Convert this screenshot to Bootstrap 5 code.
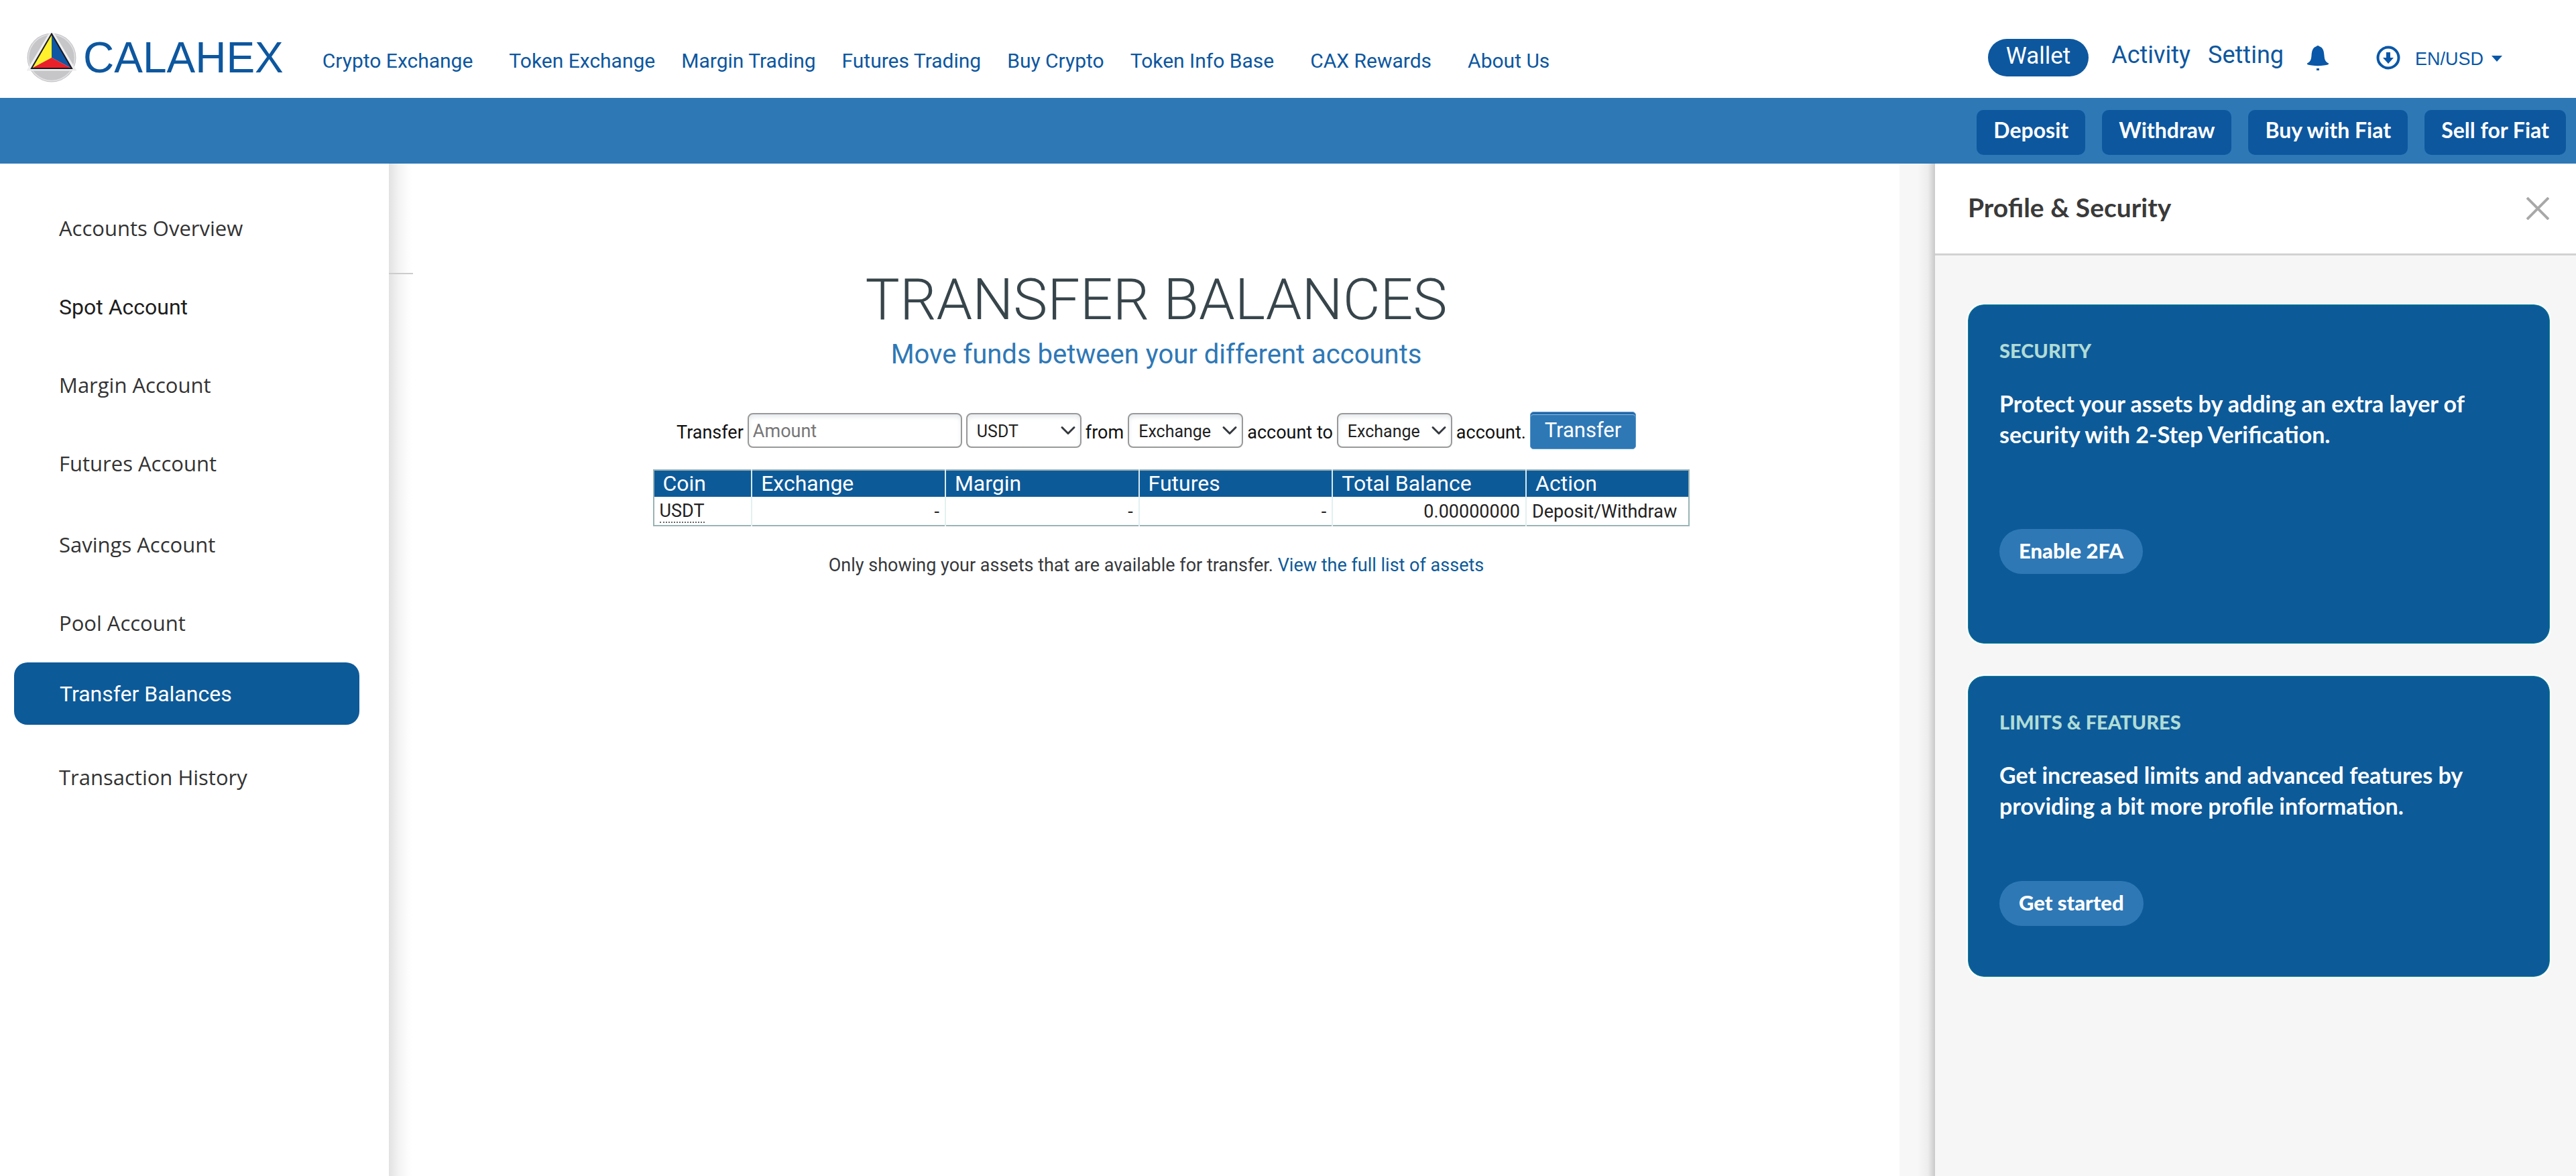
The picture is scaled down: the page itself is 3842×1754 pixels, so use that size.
<!DOCTYPE html>
<html lang="en">
<head>
<meta charset="utf-8">
<meta name="viewport" content="width=device-width, initial-scale=1">
<title>Calahex - Transfer Balances</title>
<link href="https://cdn.jsdelivr.net/npm/bootstrap@5.3.0/dist/css/bootstrap.min.css" rel="stylesheet">
<style>
  :root { --brand: #0d579f; --brand-deep: #0d5a99; --brand-soft: #2e78b6; }
  body { font-family: Roboto, "Liberation Sans", sans-serif; font-size: 27px; color: #222; background: #fff; }
  a { text-decoration: none; }

  /* top bar */
  .topbar { height: 146px; padding: 26px 106px 0 40px; }
  .brand-name { font-family: "Liberation Sans", sans-serif; font-size: 64px; line-height: 74px; color: var(--brand); margin-left: 10px; margin-right: 58px; }
  .main-links { font-size: 30px; line-height: 36px; padding-top: 10px; }
  .main-links a, .user-links a { color: var(--brand); white-space: nowrap; }
  .main-links a { margin-right: 39px; }
  .main-links a.wide { margin-right: 54px; }
  .user-links { font-size: 36px; line-height: 44px; gap: 22px; }
  .user-links .wallet-pill { font-size: 35px; line-height: 44px; color: #fff; background: var(--brand); border: 0; border-radius: 28px; padding: 4px 27px 8px; margin-right: 12px; height: 56px; }
  .user-links > a { padding-bottom: 8px; }
  .user-links > a + a { margin-left: 4px; }
  .icon-btn { border: 0; background: none; padding: 0; line-height: 0; color: #0857a8; }
  .icon-btn.bell { margin-left: 12px; }
  .icon-btn.download { margin-left: 48px; }
  .user-links .locale { font-size: 27px; line-height: 36px; border: 0; background: none; padding: 4px 0 0; color: #0857a8; font-family: "Liberation Sans", sans-serif; }

  /* action strip */
  .action-strip { background: var(--brand-soft); height: 98px; padding: 18px 15px 0; gap: 25px; }
  .action-strip .btn { font-family: Lato, sans-serif; font-weight: 700; font-size: 32px; line-height: 40px; height: 67px; padding: 10px 25px 17px; border: 0; border-radius: 10px; background: var(--brand); color: #fff; white-space: nowrap; }

  /* account menu */
  .side { width: 580px; flex: none; padding-top: 38px; }
  .side a { display: flex; align-items: center; height: 117px; padding-left: 88px; font-family: "Open Sans", "Noto Sans", sans-serif; font-size: 31px; color: #333; }
  .side a.plain { font-family: Roboto, sans-serif; font-size: 32px; color: #1d1d1d; }
  .side a.current { height: 93px; margin: 0 44px 20px 21px; padding-left: 68px; border-radius: 20px; background: var(--brand-deep); color: #fff; font-family: Roboto, sans-serif; font-size: 32px; }
  .side-shade { width: 36px; flex: none; padding-top: 163px; background: linear-gradient(to right, #e2e2e2, #f3f3f3 40%, #fdfdfd 80%, #fff); }
  .side-shade hr { margin: 0; border-top: 2px solid #ccc; opacity: 1; }

  /* transfer area */
  .work { padding-top: 153px; }
  .work h1 { font-size: 86px; line-height: 100px; font-weight: 300; color: #37454b; margin-bottom: 8px; }
  .tagline { font-size: 40px; line-height: 48px; color: var(--brand-soft); margin-bottom: 61px; }
  .transfer-form { gap: 6px; line-height: 32px; margin-bottom: 30px; color: #111; }
  .transfer-form label, .transfer-form span { padding-top: 6px; white-space: nowrap; }
  .transfer-form .form-control, .transfer-form .form-select { height: 52px; border: 2px solid #999; border-radius: 8px; box-shadow: inset 0 4px 6px #e6eaec; color: #222; }
  .transfer-form .form-control { width: 320px; font-size: 27px; padding: 6px 6px 4px; }
  .transfer-form .form-control::placeholder { color: #777; }
  .transfer-form .form-select { width: 172px; font-size: 25px; line-height: 28px; padding: 8px 30px 4px 14px; background-position: right 6px center; background-size: 24px 24px; }
  .transfer-form .btn { height: 56px; width: 158px; padding: 0; font-size: 31px; line-height: 40px; color: #fff; background: var(--brand-soft); border: 1px solid #5b98cc; border-radius: 5px; box-shadow: inset 0 3px 0 #2468a8, inset 0 4px 0 #8fbce0; }

  .balance-wrap { padding-left: 44px; }
  .balances { width: 1546px; table-layout: fixed; border: 2px solid #9ab3b5; border-collapse: collapse; color: #222; }
  .balances th { font-size: 32px; line-height: 38px; font-weight: 400; color: #fff; background: var(--brand-deep); padding: 0 13px 1px; border-right: 2px solid #d8ebee; white-space: nowrap; }
  .balances th:last-child, .balances td:last-child { border-right: 0; }
  .balances td { line-height: 34px; padding: 4px 8px 3px; border-right: 2px solid #e3f0f0; }
  .balances abbr { text-decoration: none; border-bottom: 2px dotted #666; display: inline-block; line-height: 32px; cursor: default; }
  .footnote { line-height: 40px; margin-top: 38px; color: #37393c; }
  .footnote a { color: var(--brand-deep); }

  /* profile panel */
  .gutter { width: 53px; flex: none; background: linear-gradient(to right, #f7f7f7 50%, #ededed 80%, #c9c9c9); }
  .panel { width: 956px; flex: none; background: #f6f6f6; font-family: Lato, sans-serif; font-weight: 700; }
  .panel-top { height: 137px; background: #fff; border-bottom: 3px solid #d2d2d2; padding: 0 40px 0 49px; }
  .panel-top h2 { font-size: 39px; line-height: 46px; font-weight: 700; color: #3a3a3a; margin: 0; padding-bottom: 4px; }
  .panel-body { padding: 73px 39px 0 49px; }
  .tip { background: var(--brand-deep); border: 1px solid #0b8b90; border-radius: 24px; color: #fff; padding: 50px 46px 0; margin-bottom: 48px; outline: 2px solid #fff; }
  .tip h3 { font-size: 29px; line-height: 36px; font-weight: 900; color: #b0dcd6; margin-bottom: 38px; }
  .tip p { font-size: 34px; line-height: 46px; font-weight: 700; margin: 0; }
  .tip .btn { font-weight: 900; font-size: 31px; line-height: 36px; height: 67px; border: 0; border-radius: 34px; padding: 14px 29px 17px; color: #fff; background: var(--brand-soft); }
  .tip.security .btn { margin: 118px 0 103px; }
  .tip.limits .btn { margin: 89px 0 75px; }
</style>
</head>
<body>
<div class="d-flex flex-column min-vh-100">
  <header class="topbar d-flex align-items-center justify-content-between">
    <div class="d-flex align-items-center">
      <a href="#" class="d-flex align-items-center">
        <svg width="74" height="74" viewBox="0 0 74 74" aria-hidden="true">
          <circle cx="37" cy="37" r="36.500" fill="#c6c6c9"/>
          <circle cx="37" cy="37" r="34.500" fill="none" stroke="#e2e2e4" stroke-width="1.500"/>
          <path d="M37 -1 4 54H70Z" fill="#eee" stroke="#eee" stroke-width="5"/>
          <path d="M37 1 7 53 37 37Z" fill="#fff22d"/>
          <path d="M37 1 67 53 37 37Z" fill="#0f57a3"/>
          <path d="M7 53 37 37 67 53Z" fill="#e9202a"/>
          <path d="M37 1.500 7 53H67Z" fill="none" stroke="#1b1822" stroke-width="2"/>
        </svg>
        <span class="brand-name">CALAHEX</span>
      </a>
      <nav class="main-links d-flex">
        <a href="#" class="wide">Crypto Exchange</a>
        <a href="#">Token Exchange</a>
        <a href="#">Margin Trading</a>
        <a href="#">Futures Trading</a>
        <a href="#">Buy Crypto</a>
        <a href="#" class="wide">Token Info Base</a>
        <a href="#" class="wide">CAX Rewards</a>
        <a href="#">About Us</a>
      </nav>
    </div>
    <div class="user-links d-flex align-items-center">
      <button type="button" class="wallet-pill">Wallet</button>
      <a href="#">Activity</a>
      <a href="#">Setting</a>
      <button type="button" class="icon-btn bell" aria-label="Notifications">
        <svg width="34" height="38" viewBox="0 0 34 38" fill="currentColor"><path d="M15 2Q17 0 19 2C25 4 26 9 26.500 16 27 22 28 25 33 27.500 34 29 31 30 26 30.500Q17 32 8 30.500C3 30 0 29 1 27.500 6 25 7 22 7.500 16 8 9 9 4 15 2ZM15 35H19V38H15Z"/></svg>
      </button>
      <button type="button" class="icon-btn download" aria-label="Download">
        <svg width="36" height="36" viewBox="0 0 36 36"><circle cx="18" cy="18" r="15.500" fill="none" stroke="currentColor" stroke-width="4"/><path d="M15 10H21V18H26L18 27 10 18H15Z" fill="currentColor"/></svg>
      </button>
      <button type="button" class="locale d-flex align-items-center">EN/USD
        <svg class="ms-2" width="24" height="10" viewBox="0 0 24 10" fill="currentColor" aria-hidden="true"><path d="M4 0H20L12 9Z"/></svg>
      </button>
    </div>
  </header>

  <div class="action-strip d-flex justify-content-end">
    <button type="button" class="btn">Deposit</button>
    <button type="button" class="btn">Withdraw</button>
    <button type="button" class="btn">Buy with Fiat</button>
    <button type="button" class="btn">Sell for Fiat</button>
  </div>

  <div class="d-flex flex-grow-1">
    <nav class="side">
      <a href="#">Accounts Overview</a>
      <a href="#" class="plain">Spot Account</a>
      <a href="#">Margin Account</a>
      <a href="#">Futures Account</a>
      <a href="#" class="mt-1">Savings Account</a>
      <a href="#">Pool Account</a>
      <a href="#" class="current" aria-current="page">Transfer Balances</a>
      <a href="#">Transaction History</a>
    </nav>
    <div class="side-shade"><hr></div>

    <main class="work flex-grow-1 d-flex flex-column align-items-center">
      <h1>TRANSFER BALANCES</h1>
      <p class="tagline">Move funds between your different accounts</p>
      <form class="transfer-form d-flex align-items-center">
        <label for="amount">Transfer</label>
        <input id="amount" type="text" class="form-control" placeholder="Amount">
        <select class="form-select" aria-label="Coin"><option>USDT</option></select>
        <label for="source">from</label>
        <select id="source" class="form-select"><option>Exchange</option></select>
        <label for="target">account to</label>
        <select id="target" class="form-select"><option>Exchange</option></select>
        <span>account.</span>
        <button type="button" class="btn">Transfer</button>
      </form>
      <div class="balance-wrap">
        <table class="balances">
          <colgroup><col style="width:9.5%"><col style="width:18.7%"><col style="width:18.7%"><col style="width:18.7%"><col style="width:18.7%"><col></colgroup>
          <thead><tr><th>Coin</th><th>Exchange</th><th>Margin</th><th>Futures</th><th>Total Balance</th><th>Action</th></tr></thead>
          <tbody><tr><td><abbr>USDT</abbr></td><td class="text-end">-</td><td class="text-end">-</td><td class="text-end">-</td><td class="text-end">0.00000000</td><td><a href="#" class="text-reset">Deposit/Withdraw</a></td></tr></tbody>
        </table>
      </div>
      <p class="footnote">Only showing your assets that are available for transfer. <a href="#">View the full list of assets</a></p>
    </main>

    <div class="gutter"></div>
    <aside class="panel">
      <div class="panel-top d-flex align-items-center justify-content-between">
        <h2>Profile &amp; Security</h2>
        <button type="button" class="icon-btn" aria-label="Close">
          <svg width="34" height="34" viewBox="0 0 34 34" stroke="#a8a8a8" stroke-width="4"><path d="M1 1 33 33M33 1 1 33"/></svg>
        </button>
      </div>
      <div class="panel-body">
        <section class="tip security">
          <h3>SECURITY</h3>
          <p>Protect your assets by adding an extra layer of<br>security with 2-Step Verification.</p>
          <button type="button" class="btn">Enable 2FA</button>
        </section>
        <section class="tip limits">
          <h3>LIMITS &amp; FEATURES</h3>
          <p>Get increased limits and advanced features by<br>providing a bit more profile information.</p>
          <button type="button" class="btn">Get started</button>
        </section>
      </div>
    </aside>
  </div>
</div>
<script src="https://cdn.jsdelivr.net/npm/bootstrap@5.3.0/dist/js/bootstrap.bundle.min.js"></script>
</body>
</html>
